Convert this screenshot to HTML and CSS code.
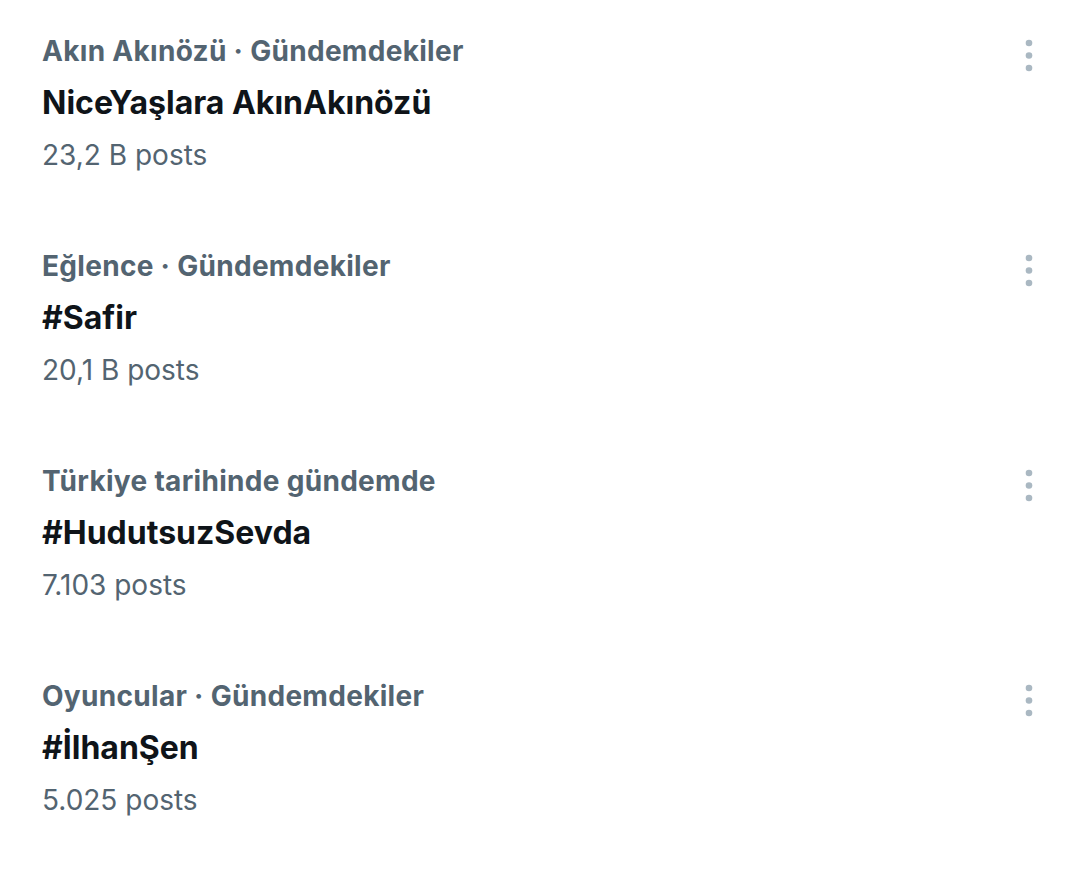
FILE: index.html
```html
<!DOCTYPE html>
<html lang="tr">

<head>
    <meta charset="UTF-8">
    <meta name="viewport" content="width=device-width, initial-scale=1.0">
    <title>Gündemdekiler</title>
    <link rel="stylesheet" href="styles.css">
</head>

<body>

    <!-- Trend list -->
    <div class="trends">

        <div class="trend">
            <div class="trend-text">
                <div class="trend-meta">Akın Akınözü · Gündemdekiler</div>
                <div class="trend-title">NiceYaşlara AkınAkınözü</div>
                <div class="trend-count">23,2 B posts</div>
            </div>
            <button class="more">
                <svg width="14" height="38" viewBox="0 0 14 38"><circle cx="7" cy="6" r="3.3"/><circle cx="7" cy="18.5" r="3.3"/><circle cx="7" cy="31" r="3.3"/></svg>
            </button>
        </div>

        <div class="trend">
            <div class="trend-text">
                <div class="trend-meta">Eğlence · Gündemdekiler</div>
                <div class="trend-title">#Safir</div>
                <div class="trend-count">20,1 B posts</div>
            </div>
            <button class="more">
                <svg width="14" height="38" viewBox="0 0 14 38"><circle cx="7" cy="6" r="3.3"/><circle cx="7" cy="18.5" r="3.3"/><circle cx="7" cy="31" r="3.3"/></svg>
            </button>
        </div>

        <div class="trend">
            <div class="trend-text">
                <div class="trend-meta">Türkiye tarihinde gündemde</div>
                <div class="trend-title">#HudutsuzSevda</div>
                <div class="trend-count">7.103 posts</div>
            </div>
            <button class="more">
                <svg width="14" height="38" viewBox="0 0 14 38"><circle cx="7" cy="6" r="3.3"/><circle cx="7" cy="18.5" r="3.3"/><circle cx="7" cy="31" r="3.3"/></svg>
            </button>
        </div>

        <div class="trend">
            <div class="trend-text">
                <div class="trend-meta">Oyuncular · Gündemdekiler</div>
                <div class="trend-title">#İlhanŞen</div>
                <div class="trend-count">5.025 posts</div>
            </div>
            <button class="more">
                <svg width="14" height="38" viewBox="0 0 14 38"><circle cx="7" cy="6" r="3.3"/><circle cx="7" cy="18.5" r="3.3"/><circle cx="7" cy="31" r="3.3"/></svg>
            </button>
        </div>

    </div>

</body>

</html>
```

FILE: styles.css
```css
body {
    margin: 0;
    background: #fff;
    font-family: Inter, Roboto, sans-serif;
}

.trends {
    display: flex;
    flex-direction: column;
}

.trend {
    display: flex;
    justify-content: space-between;
    align-items: flex-start;
    padding: 25px 44px 34px 42px;
}

.trend-meta {
    font-size: 28px;
    font-weight: 700;
    line-height: 52px;
    letter-spacing: 0.3px;
    color: #536471;
}

.trend-title {
    font-size: 32px;
    font-weight: 700;
    line-height: 52px;
    color: #0f1419;
}

.trend-count {
    font-size: 28px;
    line-height: 52px;
    color: #536471;
}

.more {
    margin-top: 12px;
    padding: 0;
    border: none;
    background: none;
    line-height: 0;
}

.more svg {
    fill: #aab8c2;
}
```
